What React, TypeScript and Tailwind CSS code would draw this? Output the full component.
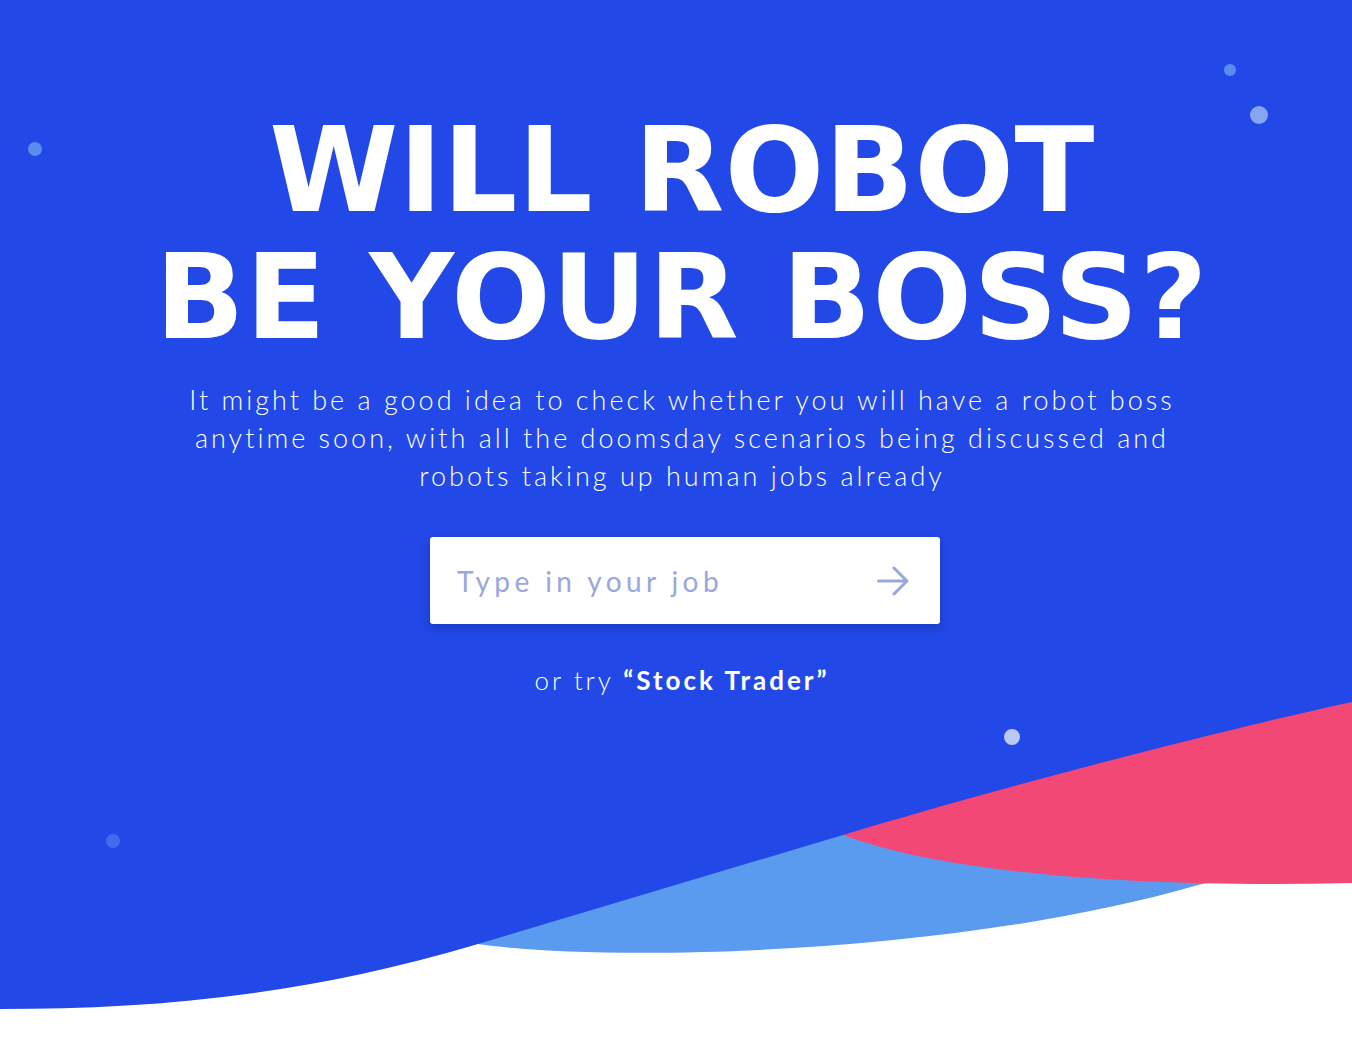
import React from "react";

function Arrow() {
  return (
    <svg width="32" height="32" viewBox="0 0 32 32" fill="none" className="shrink-0">
      <path d="M1.5 16 H30 M17 3 L30 16 L17 29" stroke="#9aa6e0" strokeWidth="3" strokeLinecap="round" strokeLinejoin="round" />
    </svg>
  );
}

export default function App() {
  return (
    <div className="relative w-full min-h-[1060px] bg-white overflow-hidden" style={{ fontFamily: "Lato, 'Open Sans', sans-serif" }}>
      {/* decorative dots */}
      <span className="absolute left-[28px] top-[142px] h-[14px] w-[14px] rounded-full bg-[#5a8cf0]" />
      <span className="absolute left-[1224px] top-[64px] h-[12px] w-[12px] rounded-full bg-[#5a8cf0]" />
      <span className="absolute left-[1250px] top-[106px] h-[18px] w-[18px] rounded-full bg-[#86a6f2]" />

      <section className="h-[700px] bg-[#2249e7] flex flex-col items-center pl-[12px]">
        <h1
          className="mt-[107px] text-white text-center font-bold text-[117px] leading-[127px] uppercase"
          style={{ fontFamily: "'DejaVu Sans', sans-serif" }}
        >
          <span className="block tracking-[0.5px]">WILL ROBOT</span>
          <span className="block tracking-[1.4px]">BE YOUR BOSS?</span>
        </h1>
        <p className="mt-[20px] w-[1010px] text-center text-white font-light text-[27px] leading-[38px] tracking-[3px]">
          It might be a good idea to check whether you will have a robot boss anytime soon, with all the doomsday scenarios being discussed and robots taking up human jobs already
        </p>
        <div className="mt-[42px] ml-[6px] flex h-[89px] w-[510px] items-center justify-between rounded-[3px] bg-white pl-[27px] pr-[31px] shadow-[0_4px_10px_rgba(10,30,120,0.35)]">
          <span className="text-[28px] tracking-[4.4px] text-[#9aa6e0]">Type in your job</span>
          <Arrow />
        </div>
        <p className="mt-[37px] text-white text-[26px] tracking-[3px] font-light">
          or try <span className="font-bold">“Stock Trader”</span>
        </p>
      </section>

      <svg className="block" width="1352" height="360" viewBox="0 700 1352 360">
        <path d="M478 944 C600 962 950 957 1198 885 L1352 850 L1352 700 L478 700 Z" fill="#5a9bef" />
        <path d="M800 700 L1352 700 L1352 883 C1150 888 950 875 843 835 L800 820 Z" fill="#f24876" />
        <path d="M0 700 L1352 700 L1352 702 C1200 735 1000 788 843 835 L478 944 C300 997 150 1009 0 1009 Z" fill="#2249e7" />
        <circle cx="1012" cy="737" r="8" fill="#b9c9f5" />
        <circle cx="113" cy="841" r="7" fill="#3f6bec" />
      </svg>
    </div>
  );
}
